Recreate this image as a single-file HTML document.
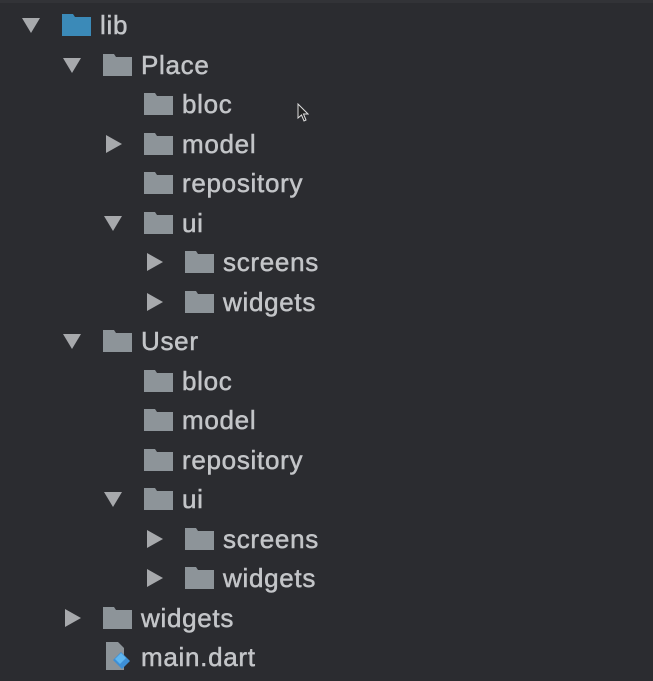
<!DOCTYPE html>
<html><head><style>
body{margin:0;width:653px;height:681px;background:#2b2c30;overflow:hidden;position:relative;font-family:"Liberation Sans",sans-serif;}
.r{position:absolute;height:30px;}
.t{position:absolute;top:0px;font-size:26px;letter-spacing:0.7px;color:#c3c5c8;line-height:30px;white-space:nowrap;-webkit-text-stroke:0.5px #c3c5c8}
.dn{position:absolute;width:0;height:0;border-left:9px solid transparent;border-right:9px solid transparent;border-top:15px solid #a7a9ac;top:8px}
.rt{position:absolute;width:0;height:0;border-top:9px solid transparent;border-bottom:9px solid transparent;border-left:16px solid #a7a9ac;top:6px}
.f{position:absolute;top:4px;width:29px;height:22px}
</style></head><body>
<div style="position:absolute;left:0;top:0;width:653px;height:3px;background:#323337"></div>
<svg width="0" height="0" style="position:absolute"><defs>
<symbol id="fd" viewBox="0 0 29 22"><path d="M0 0H11L13 3H29V22H0Z"/></symbol></defs></svg>
<div id="tree"></div>
<script>
var rows=[[0,'dn','lib',1],[1,'dn','Place'],[2,'','bloc'],[2,'rt','model'],[2,'','repository'],[2,'dn','ui'],[3,'rt','screens'],[3,'rt','widgets'],[1,'dn','User'],[2,'','bloc'],[2,'','model'],[2,'','repository'],[2,'dn','ui'],[3,'rt','screens'],[3,'rt','widgets'],[1,'rt','widgets'],[1,'','main.dart',2]];
var h='';
rows.forEach(function(r,i){
 var y=10+i*39.5, L=r[0]*41;
 h+='<div class="r" style="top:'+y+'px;left:0;width:653px">';
 if(r[1]=='dn')h+='<div class="dn" style="left:'+(22+L)+'px"></div>';
 if(r[1]=='rt')h+='<div class="rt" style="left:'+(24+L)+'px"></div>';
 if(r[3]==2){
  h+='<svg class="f" style="left:'+(62+L)+'px;top:0px;height:30px;width:34px" viewBox="0 0 34 30"><path d="M3 0H15L21 6V28H3Z" fill="#8d9499"/><path d="M10 18L18 10L27 19L19 27Z" fill="#3d8fd6"/><path d="M12 17L18 11L23 16L17 22Z" fill="#5fb6f0"/></svg>';
 } else {
  h+='<svg class="f" style="left:'+(62+L)+'px" fill="'+(r[3]==1?'#3b8ab8':'#8d9499')+'"><use href="#fd"/></svg>';
 }
 h+='<div class="t" style="left:'+(100+L)+'px">'+r[2]+'</div></div>';
});
document.getElementById('tree').innerHTML=h;
</script>
<svg style="position:absolute;left:297px;top:103px" width="12" height="20" viewBox="0 0 12 20"><path d="M1 1V15L4.5 12L7 18L9 17L6.5 11H11Z" fill="#222" stroke="#ddd" stroke-width="1"/></svg>
</body></html>
